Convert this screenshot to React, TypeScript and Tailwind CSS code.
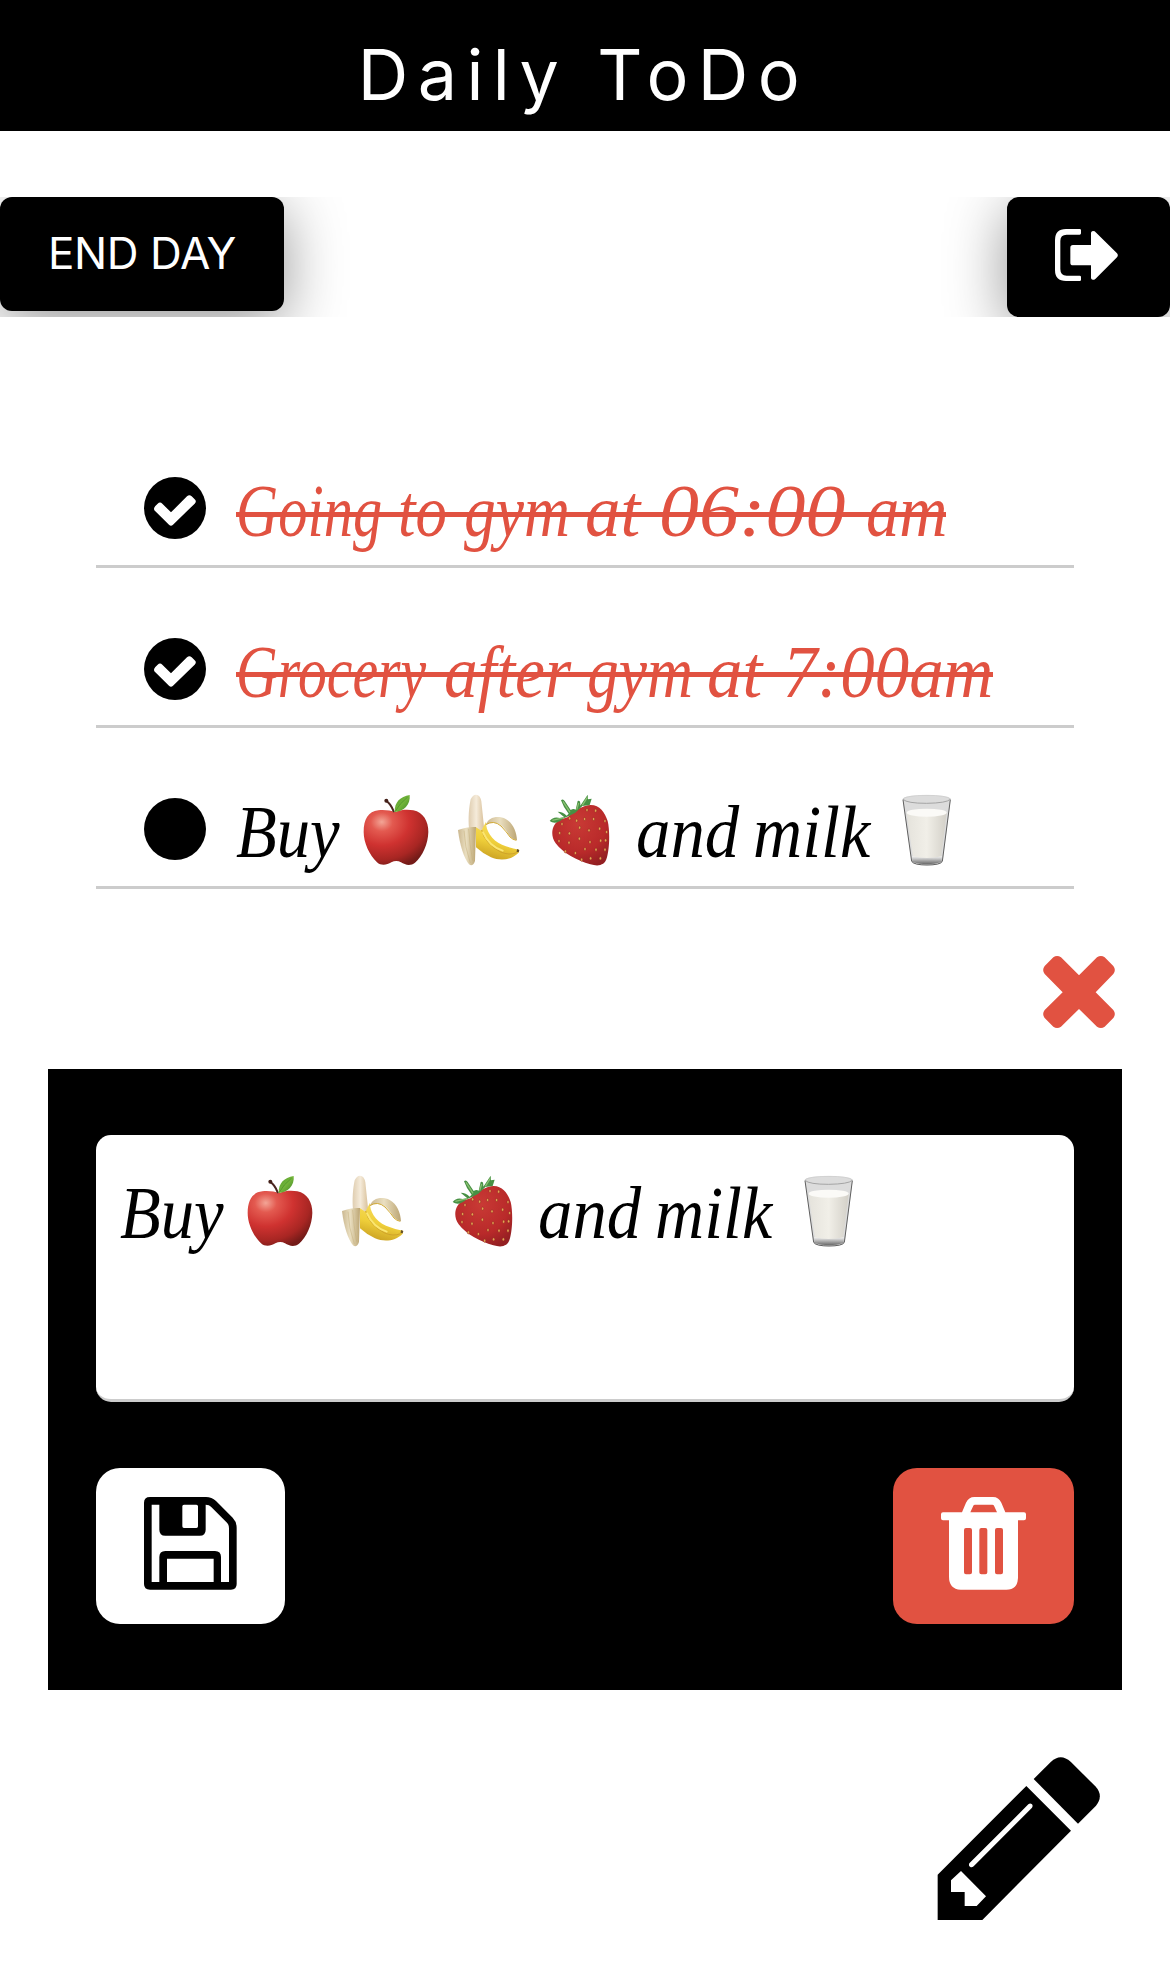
import React from "react";

const Check = () => (
  <svg className="block h-[62px] w-[62px] shrink-0" viewBox="162 52 186 186">
    <circle cx="255" cy="145" r="93" fill="#000" />
    <path d="M192 148Q192 143 196 139L203 132Q210 125 217 132L243 158L291 110Q298 103 305 110L314 119Q321 125 314 132L249 195Q243 201 237 195L196 155Q192 152 192 148Z" fill="#fff" />
  </svg>
);

const Dot = () => <span className="block h-[62px] w-[62px] shrink-0 rounded-full bg-black" />;

const Apple = () => (
  <svg className="block h-[72px] w-[66px]" viewBox="68 72 198 216">
    <defs>
      <radialGradient id="appleSkin" cx="0.28" cy="0.22" r="0.85">
        <stop offset="0" stopColor="#f3a596" />
        <stop offset="0.2" stopColor="#e35a50" />
        <stop offset="0.5" stopColor="#cf3230" />
        <stop offset="0.8" stopColor="#a82623" />
        <stop offset="1" stopColor="#741b18" />
      </radialGradient>
      <linearGradient id="appleLeaf" x1="0" y1="0" x2="1" y2="1">
        <stop offset="0" stopColor="#4f9a2c" />
        <stop offset="0.5" stopColor="#74b53a" />
        <stop offset="1" stopColor="#3d8226" />
      </linearGradient>
    </defs>
    <path d="M166 126C184 118 205 119 219 121C249 127 264 154 264 186C263 222 247 258 224 278C211 289 194 285 182 277Q168 269 153 277C139 286 122 288 110 277C87 255 70 218 70 186C70 148 84 124 114 121C134 119 150 122 166 126Z" fill="url(#appleSkin)" />
    <path d="M137 92Q151 101 160 124" fill="none" stroke="#4a2620" strokeWidth="6" strokeLinecap="round" />
    <circle cx="138" cy="92" r="6" fill="#442019" />
    <path d="M163 126C162 96 180 80 208 75C211 104 190 125 163 126Z" fill="url(#appleLeaf)" />
    <path d="M164 125Q177 101 202 81" fill="none" stroke="#468b2a" strokeWidth="2" />
  </svg>
);

const Banana = () => (
  <svg className="block h-[72px] w-[63px]" viewBox="351 72 189 216">
    <defs>
      <linearGradient id="bananaPeel" x1="0" y1="0" x2="1" y2="0">
        <stop offset="0" stopColor="#cbb78f" />
        <stop offset="0.45" stopColor="#eadfc1" />
        <stop offset="1" stopColor="#bca573" />
      </linearGradient>
      <linearGradient id="bananaFlesh" x1="0" y1="0" x2="1" y2="0">
        <stop offset="0" stopColor="#dfcdb0" />
        <stop offset="0.5" stopColor="#f5ebda" />
        <stop offset="1" stopColor="#d9c19b" />
      </linearGradient>
      <linearGradient id="bananaBody" x1="0.6" y1="0" x2="0.3" y2="1">
        <stop offset="0" stopColor="#f8de63" />
        <stop offset="0.55" stopColor="#efcf3a" />
        <stop offset="1" stopColor="#c99f21" />
      </linearGradient>
    </defs>
    <path d="M387 176C384 145 387 110 392 88Q398 74 408 74Q421 75 424 94L432 170L424 183L404 178Z" fill="url(#bananaFlesh)" />
    <path d="M407 171L424 182L438 155C437 180 453 209 486 224Q510 234 537 239L536 248C514 270 482 274 453 262Q430 252 408 232Z" fill="url(#bananaBody)" />
    <path d="M425 180Q435 222 482 246Q507 257 530 248" fill="none" stroke="#cfa32b" strokeWidth="3" />
    <path d="M429 187Q447 228 488 242" fill="none" stroke="#fbe671" strokeWidth="6" strokeLinecap="round" />
    <path d="M531 237L538 240L536 247L530 246Z" fill="#655026" />
    <path d="M354 180Q384 169 408 171L405 273Q398 292 387 283C372 264 359 225 354 180Z" fill="url(#bananaPeel)" />
    <path d="M372 182Q374 231 391 279M386 177Q389 225 398 272" fill="none" stroke="#c3ac79" strokeWidth="2" opacity=".7" />
    <path d="M438 165C444 141 475 135 497 147C519 159 530 186 531 211Q511 207 500 184C483 159 461 151 438 165Z" fill="url(#bananaPeel)" />
    <path d="M437 164Q461 149 483 168Q501 187 510 201Q519 210 529 211" fill="none" stroke="#d2aa35" strokeWidth="3" />
  </svg>
);

const seeds = [
  [689, 143], [710, 150], [734, 145], [761, 145], [767, 120], [795, 151], [666, 160], [719, 171], [747, 179], [779, 174], [800, 184],
  [659, 187], [688, 188], [657, 211], [687, 216], [718, 204], [750, 214], [782, 210], [676, 242], [706, 247], [735, 235], [768, 237],
  [795, 237], [725, 267], [752, 263], [781, 263], [797, 209], [741, 118],
];

const Strawberry = () => (
  <svg className="block h-[72px] w-[61px]" viewBox="627 70 183 216">
    <defs>
      <radialGradient id="berrySkin" cx="0.45" cy="0.3" r="0.75">
        <stop offset="0" stopColor="#c93a35" />
        <stop offset="0.65" stopColor="#b92a2a" />
        <stop offset="1" stopColor="#931f22" />
      </radialGradient>
    </defs>
    <path d="M684 139C703 119 730 104 752 103C779 103 795 126 803 151C810 179 809 235 800 263C794 284 776 288 751 281C712 270 668 247 647 218C627 190 639 157 660 147Z" fill="url(#berrySkin)" />
    {seeds.map(([x, y]) => (
      <ellipse key={`${x}-${y}`} cx={x} cy={y} rx="3.2" ry="4.8" fill="#e8ad55" stroke="#8f2420" strokeWidth="1.5" />
    ))}
    <path d="M629 151Q640 136 660 142L673 140L653 123Q669 123 680 135L686 129Q670 110 663 89Q669 83 674 91L692 118Q700 113 707 117L713 91Q722 87 721 105L743 72L744 86L755 84L749 103L727 106L706 126L687 136L671 143Q647 165 629 151Z" fill="#479044" />
    <path d="M637 149L672 141M669 92L690 125M716 97L710 117M742 80L727 104" fill="none" stroke="#89bf70" strokeWidth="4" />
  </svg>
);

const Milk = () => (
  <svg className="block h-[72px] w-[49px]" viewBox="967 1003 147 216">
    <defs>
      <linearGradient id="milkFill" x1="0" y1="0" x2="1" y2="0">
        <stop offset="0" stopColor="#e5e3dc" />
        <stop offset="0.5" stopColor="#f1efe8" />
        <stop offset="1" stopColor="#d3d0c8" />
      </linearGradient>
      <linearGradient id="milkBase" x1="0" y1="0" x2="0" y2="1">
        <stop offset="0" stopColor="#f2f2f2" />
        <stop offset="1" stopColor="#666" />
      </linearGradient>
    </defs>
    <path d="M969 1018Q971 1007 1041 1006Q1111 1007 1113 1018L1089 1205Q1087 1217 1042 1217Q998 1217 996 1205Z" fill="#dcdcdc" />
    <path d="M981 1060L1101 1060L1084 1192Q1042 1200 1000 1192Z" fill="url(#milkFill)" />
    <ellipse cx="1041" cy="1059" rx="60" ry="12" fill="#fbfaf7" />
    <path d="M997 1190Q1042 1200 1087 1190L1086 1207Q1042 1221 998 1207Z" fill="url(#milkBase)" />
    <path d="M970 1020L996 1205Q1003 1216 1042 1216Q1082 1216 1088 1205L1112 1020" fill="none" stroke="#5f5f5f" strokeWidth="3" />
    <path d="M970 1019Q982 1031 1041 1031Q1101 1030 1112 1019" fill="none" stroke="#999" strokeWidth="2.5" />
    <path d="M970 1018Q981 1007 1041 1007Q1101 1007 1112 1018" fill="none" stroke="#c8c8c8" strokeWidth="2" />
  </svg>
);

/* gap is the space before the word; scale condenses the italic face. */
type Word = { text: string; gap: number; width: number; scale: number };

const Script = ({ text, gap, width, scale }: Word) => (
  <span className="block shrink-0 whitespace-pre" style={{ width, marginLeft: gap }}>
    <span className="inline-block origin-left" style={{ transform: `scaleX(${scale})` }}>{text}</span>
  </span>
);

const Emoji = ({ gap, children }: { gap: number; children: React.ReactNode }) => (
  <span className="mt-[3px] block shrink-0" style={{ marginLeft: gap }}>{children}</span>
);

const lineClass =
  "relative flex h-[82px] items-start font-['Liberation_Serif',serif] text-[74px] italic leading-[82px]";

const gymWords: Word[] = [
  { text: "Going", gap: 0, width: 146, scale: 0.79 },
  { text: "to", gap: 16, width: 49, scale: 0.85 },
  { text: "gym", gap: 17, width: 107, scale: 0.86 },
  { text: "at", gap: 14, width: 56, scale: 0.96 },
  { text: "06:00", gap: 18, width: 188, scale: 1.08 },
  { text: "am", gap: 19, width: 81, scale: 0.9 },
];

const groceryWords: Word[] = [
  { text: "Grocery", gap: 0, width: 192, scale: 0.78 },
  { text: "after", gap: 16, width: 127, scale: 0.91 },
  { text: "gym", gap: 16, width: 107, scale: 0.86 },
  { text: "at", gap: 13, width: 56, scale: 0.96 },
  { text: "7:00am", gap: 20, width: 211, scale: 0.93 },
];

const Item = ({ className, icon, children }: { className: string; icon: React.ReactNode; children: React.ReactNode }) => (
  <li className={`flex border-b-[3px] border-[#cccccc] pl-12 ${className}`}>
    <span className="pt-[70px]">{icon}</span>
    <div className="ml-[30px] pt-[63px]">{children}</div>
  </li>
);

export default function App() {
  return (
    <div className="h-[1986px] w-[1170px] overflow-hidden bg-white font-[Inter,sans-serif] text-black">
      <header className="flex h-[131px] justify-center bg-black pt-[33px]">
        <h1 className="pr-[3px] text-[70px] leading-[84px] font-normal tracking-[9.4px] text-white">Daily ToDo</h1>
      </header>

      <div className="mt-[66px] flex h-[120px] items-start justify-between overflow-hidden">
        <button className="h-[114px] w-[284px] rounded-xl bg-black pb-0.5 text-[44px] leading-none tracking-[-0.4px] text-white shadow-[0_12px_60px_rgba(0,0,0,0.42)]">
          END DAY
        </button>
        <button aria-label="Sign out" className="flex h-[120px] w-[163px] items-start justify-start rounded-xl bg-black pt-8 pl-12 shadow-[0_12px_60px_rgba(0,0,0,0.42)]">
          <svg className="block h-[52px] w-[63px]" viewBox="225 147 189 156">
            <path d="M225 180Q225 147 258 147H299Q303 147 303 151V160Q303 164 299 164H260Q241 164 241 183V267Q241 287 260 287H299Q303 287 303 291V299Q303 303 299 303H258Q225 303 225 270Z" fill="#fff" />
            <path d="M271 203Q271 195 279 195H333V158Q335 150 344 154L411 220Q416 226 411 232L346 297Q337 303 333 295V256H279Q271 256 271 248Z" fill="#fff" />
          </svg>
        </button>
      </div>

      <ul className="mt-[90px] px-24">
        <Item className="h-[161px]" icon={<Check />}>
          <div className={`${lineClass} text-[#e15241]`}>
            {gymWords.map((w) => <Script key={w.text} {...w} />)}
            <span className="absolute top-[42px] left-0 h-[4.5px] w-[710px] bg-[#e15241]" />
          </div>
        </Item>
        <Item className="h-[160px]" icon={<Check />}>
          <div className={`${lineClass} text-[#e15241]`}>
            {groceryWords.map((w) => <Script key={w.text} {...w} />)}
            <span className="absolute top-[41px] left-0 h-[4.5px] w-[757px] bg-[#e15241]" />
          </div>
        </Item>
        <Item className="h-[161px]" icon={<Dot />}>
          <div className={lineClass}>
            <Script text="Buy" gap={0} width={103} scale={0.9} />
            <Emoji gap={24}><Apple /></Emoji>
            <Emoji gap={28}><Banana /></Emoji>
            <Emoji gap={29}><Strawberry /></Emoji>
            <Script text="and" gap={26} width={103} scale={0.93} />
            <Script text="milk" gap={14} width={117} scale={0.92} />
            <Emoji gap={32}><Milk /></Emoji>
          </div>
        </Item>
      </ul>

      <div className="flex h-[180px] justify-end pt-[67px] pr-[55px]">
        <svg className="block h-[72px] w-[72px]" viewBox="70 78 216 216">
          <path d="M101 82Q112 74 124 82L178 136L232 82Q244 74 255 82L281 108Q290 120 281 132L228 187L281 240Q290 252 281 264L255 290Q244 298 232 290L178 237L124 290Q112 298 101 290L75 264Q66 252 75 240L129 187L75 132Q66 120 75 108Z" fill="#e15241" />
        </svg>
      </div>

      <section className="mx-12 h-[621px] bg-black px-12 pt-[66px]">
        <div className="h-[267px] rounded-[15px] border-b-[3px] border-[#cccccc] bg-white pt-[37px] pl-[25px]">
          <div className={lineClass}>
            <Script text="Buy" gap={-1} width={103} scale={0.9} />
            <Emoji gap={24}><Apple /></Emoji>
            <Emoji gap={28}><Banana /></Emoji>
            <Emoji gap={48}><Strawberry /></Emoji>
            <Script text="and" gap={25} width={103} scale={0.93} />
            <Script text="milk" gap={14} width={117} scale={0.92} />
            <Emoji gap={32}><Milk /></Emoji>
          </div>
        </div>

        <div className="mt-[66px] flex justify-between">
          <button aria-label="Save" className="flex h-[156px] w-[189px] items-start rounded-3xl bg-white pt-[29px] pl-12">
            <svg className="block h-[93px] w-[93px]" viewBox="162 141 279 279">
              <path fillRule="evenodd" d="M180 141H348Q365 141 378 153L428 203Q440 215 440 234V402Q440 419 423 419H180Q162 419 162 402V158Q162 141 180 141ZM185 164V396H208V321Q208 303 226 303H375Q393 303 393 321V396H417V235Q417 224 411 218L363 170Q358 164 347 164V239Q347 257 329 257H226Q208 257 208 239V164ZM231 326V396H371V326ZM282 164Q277 164 277 169V229Q277 234 282 234H319Q324 234 324 229V169Q324 164 319 164Z" fill="#000" />
            </svg>
          </button>
          <button aria-label="Delete" className="flex h-[156px] w-[181px] items-start rounded-3xl bg-[#e15241] pt-[29px] pl-12">
            <svg className="block h-[93px] w-[85px]" viewBox="213 141 255 279">
              <path fillRule="evenodd" d="M276 187L288 158Q296 141 313 141H369Q386 141 394 158L406 187H462Q468 187 468 193V205Q468 211 462 211H444V384Q443 419 409 419H272Q237 417 237 380V211H219Q213 211 213 205V193Q213 187 219 187ZM301 187H381L372 167Q371 164 367 164H315Q311 164 310 167ZM288 234Q282 234 282 240V367Q282 373 288 373H300Q306 373 306 367V240Q306 234 300 234ZM334 234Q328 234 328 240V367Q328 373 334 373H346Q352 373 352 367V240Q352 234 346 234ZM381 234Q375 234 375 240V367Q375 373 381 373H393Q399 373 399 367V240Q399 234 393 234Z" fill="#fff" />
            </svg>
          </button>
        </div>
      </section>

      <div className="flex justify-end pt-[67px] pr-[70px]">
        <svg className="block h-[163px] w-[163px]" viewBox="112 81 489 489">
          <path fillRule="evenodd" d="M114 434L380 168L514 302L248 570H114ZM154 451V486H195V528H231L259 499L184 423ZM386 223L209 400Q206 407 211 410Q216 414 222 409L397 233Q401 226 396 222Q391 219 386 223Z" fill="#000" />
          <path d="M402 147L454 95Q483 68 513 95L587 169Q613 197 589 227L535 281Z" fill="#000" />
        </svg>
      </div>
    </div>
  );
}
